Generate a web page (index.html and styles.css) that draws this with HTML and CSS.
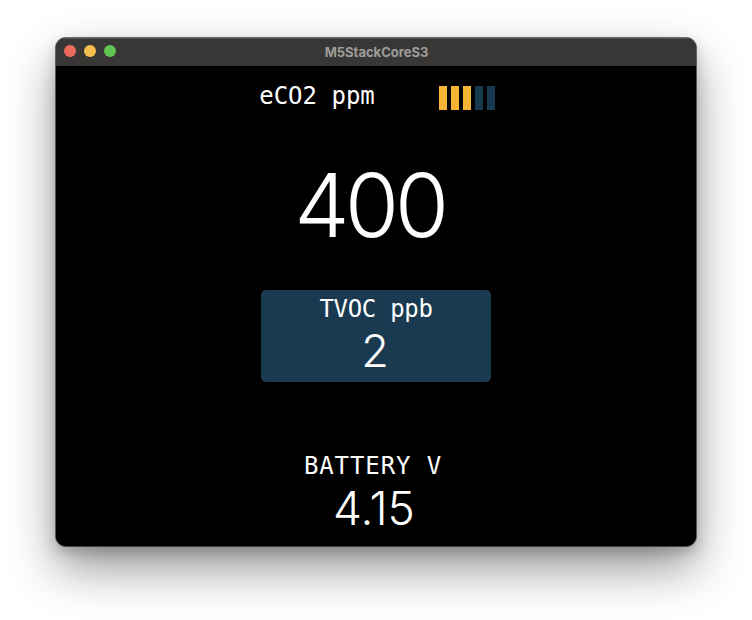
FILE: index.html
```html
<!DOCTYPE html>
<html>
<head>
<meta charset="utf-8">
<title>M5StackCoreS3</title>
<link rel="stylesheet" href="styles.css">
</head>
<body>
<div class="window">
  <div class="titlebar">
    <div class="lights">
      <span class="light red"></span>
      <span class="light yellow"></span>
      <span class="light green"></span>
    </div>
    <div class="title">M5StackCoreS3</div>
  </div>
  <div class="screen">
    <div class="header">
      <div class="label eco2">eCO2 ppm</div>
      <div class="bars">
        <span class="bar on"></span>
        <span class="bar on"></span>
        <span class="bar on"></span>
        <span class="bar off"></span>
        <span class="bar off"></span>
      </div>
    </div>
    <div class="big">400</div>
    <div class="card">
      <div class="label tvoc">TVOC ppb</div>
      <div class="mid">2</div>
    </div>
    <div class="label batt">BATTERY V</div>
    <div class="mid volts">4.15</div>
  </div>
</div>
</body>
</html>
```
FILE: styles.css
```css
html, body {
  margin: 0;
  padding: 0;
  background: #ffffff;
}
body {
  width: 752px;
  height: 620px;
  overflow: hidden;
}
.window {
  margin: 38px 0 0 56px;
  width: 640px;
  height: 508px;
  border-radius: 10px;
  overflow: hidden;
  background: #000;
  box-shadow: 0 0 0 1px rgba(0,0,0,0.55), 0 22px 48px rgba(0,0,0,0.42), 0 6px 14px rgba(0,0,0,0.2);
  display: flex;
  flex-direction: column;
}
.titlebar {
  height: 28px;
  flex: none;
  background: #383735;
  box-shadow: inset 0 1px 0 rgba(255,255,255,0.14);
  position: relative;
  display: flex;
  align-items: center;
  justify-content: center;
}
.lights {
  position: absolute;
  left: 8px;
  top: 7px;
  display: flex;
  gap: 8px;
}
.light {
  width: 12px;
  height: 12px;
  border-radius: 50%;
  display: block;
}
.red { background: #ec6a5e; }
.yellow { background: #f4bf4f; }
.green { background: #61c554; }
.title {
  font-family: Inter, "Liberation Sans", sans-serif;
  font-weight: 700;
  font-size: 13px;
  color: #9e9d9b;
  margin-left: 1px;
}
.screen {
  flex: 1;
  background: #000;
  display: flex;
  flex-direction: column;
  align-items: center;
  color: #fff;
}
.header {
  display: flex;
  align-items: flex-start;
  gap: 64px;
  padding-top: 20px;
  margin-left: 2px;
}
.label {
  font-family: "DejaVu Sans Mono", "Liberation Mono", monospace;
  font-size: 24px;
  line-height: 0.766;
  color: #fff;
  white-space: nowrap;
}
.eco2 { margin-top: 1px; }
.bars {
  display: flex;
  gap: 4px;
}
.bar {
  display: block;
  width: 8px;
  height: 24px;
}
.bar.on { background: #f5b532; }
.bar.off { background: #183a51; }
.big {
  font-family: Inter, "Liberation Sans", sans-serif;
  font-weight: 300;
  font-size: 88px;
  line-height: 0.727;
  letter-spacing: -7px;
  font-variant-numeric: tabular-nums;
  margin-top: 64px;
  margin-right: 15px;
}
.card {
  margin-top: 52px;
  width: 230px;
  height: 92px;
  box-sizing: border-box;
  background: #193a51;
  border-radius: 5px;
  display: flex;
  flex-direction: column;
  align-items: center;
  padding-top: 10px;
}
.tvoc {
  letter-spacing: -0.3px;
}
.mid {
  font-family: Inter, "Liberation Sans", sans-serif;
  font-weight: 300;
  font-size: 45px;
  line-height: 0.727;
  color: #fff;
  margin-top: 17px;
  margin-right: 2px;
}
.batt {
  margin-top: 75px;
  letter-spacing: 0.9px;
  margin-right: 6px;
}
.volts {
  margin-top: 17px;
  font-size: 46px;
  margin-right: 4px;
}
```
